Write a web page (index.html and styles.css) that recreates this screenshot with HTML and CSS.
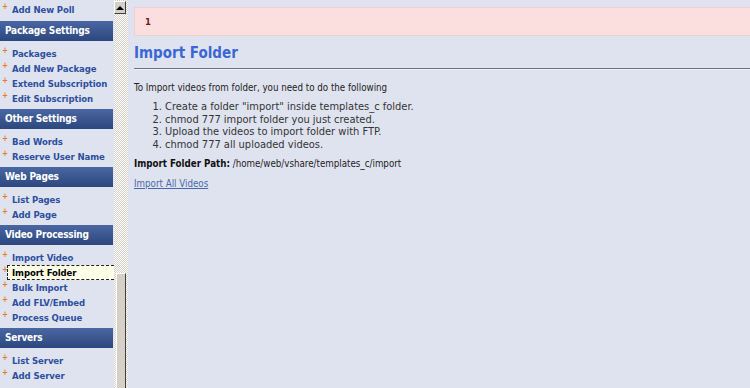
FILE: index.html
```html
<!DOCTYPE html>
<html lang="en">
<head>
    <meta charset="UTF-8">
    <title>Import Folder</title>
    <link rel="stylesheet" href="styles.css">
</head>
<body>
    <div class="sidebar">
        <ul class="menu menu-first">
            <li><a href="#">Add New Poll</a></li>
        </ul>
        <div class="menu-title">Package Settings</div>
        <ul class="menu">
            <li><a href="#">Packages</a></li>
            <li><a href="#">Add New Package</a></li>
            <li><a href="#">Extend Subscription</a></li>
            <li><a href="#">Edit Subscription</a></li>
        </ul>
        <div class="menu-title">Other Settings</div>
        <ul class="menu">
            <li><a href="#">Bad Words</a></li>
            <li><a href="#">Reserve User Name</a></li>
        </ul>
        <div class="menu-title">Web Pages</div>
        <ul class="menu">
            <li><a href="#">List Pages</a></li>
            <li><a href="#">Add Page</a></li>
        </ul>
        <div class="menu-title">Video Processing</div>
        <ul class="menu">
            <li><a href="#">Import Video</a></li>
            <li class="active"><a href="#">Import Folder</a></li>
            <li><a href="#">Bulk Import</a></li>
            <li><a href="#">Add FLV/Embed</a></li>
            <li><a href="#">Process Queue</a></li>
        </ul>
        <div class="menu-title">Servers</div>
        <ul class="menu">
            <li><a href="#">List Server</a></li>
            <li><a href="#">Add Server</a></li>
        </ul>
    </div>

    <div class="scrollbar">
        <div class="scroll-btn"><span class="arrow-up"></span></div>
        <div class="scroll-track"></div>
        <div class="scroll-thumb"></div>
    </div>

    <div class="content">
        <div class="error-box">1</div>
        <h2 class="page-title">Import Folder</h2>
        <p class="intro">To Import videos from folder, you need to do the following</p>
        <ol class="steps">
            <li>Create a folder "import" inside templates_c folder.</li>
            <li>chmod 777 import folder you just created.</li>
            <li>Upload the videos to import folder with FTP.</li>
            <li>chmod 777 all uploaded videos.</li>
        </ol>
        <p class="path"><b>Import Folder Path:</b> /home/web/vshare/templates_c/import</p>
        <p class="link-row"><a class="import-link" href="#">Import All Videos</a></p>
    </div>
</body>
</html>
```

FILE: styles.css
```css
body {
    margin: 0;
    display: flex;
    height: 388px;
    overflow: hidden;
    background: #dfe3f0;
    font-family: Tahoma, "DejaVu Sans Condensed", "DejaVu Sans", sans-serif;
}

.sidebar {
    width: 114px;
    flex-shrink: 0;
    background: #dfe3f0;
}

.menu {
    list-style: none;
    margin: 0;
    padding: 5px 0 3px 0;
}

.menu-first {
    padding-top: 2px;
    padding-bottom: 4px;
}

.menu li {
    display: flex;
    height: 15px;
    align-items: center;
    white-space: nowrap;
}

.menu li::before {
    content: "+";
    color: #e67a2e;
    font-weight: bold;
    font-size: 8px;
    width: 8px;
    padding-left: 2px;
    align-self: flex-start;
    line-height: 9px;
}

.menu a {
    color: #2d4f9e;
    font-weight: bold;
    font-size: 9.5px;
    text-decoration: none;
    padding-left: 2px;
    letter-spacing: -0.1px;
}

.menu li.active a {
    flex: 1;
    color: #000;
    background: #ffffe8;
    border: 1px dashed #222;
    border-right: none;
    margin-left: -3px;
    padding: 1px 4px;
}

.menu-title {
    height: 20px;
    line-height: 20px;
    padding-left: 5px;
    color: #fff;
    font-weight: bold;
    font-size: 10px;
    letter-spacing: -0.2px;
    white-space: nowrap;
    background: linear-gradient(to bottom, #4a67a3, #2c477e);
    margin-right: 1px;
}

/* fake classic scrollbar */
.scrollbar {
    width: 14px;
    flex-shrink: 0;
    display: flex;
    flex-direction: column;
    background-color: #eeebe6;
    background-image: repeating-conic-gradient(#d4d0c8 0 25%, #ffffff 0 50%);
    background-size: 2px 2px;
}

.scroll-btn {
    height: 11px;
    margin: 1px 2px 0 0;
    background: #d4d0c8;
    border-top: 1px solid #fff;
    border-left: 1px solid #fff;
    border-right: 1px solid #404040;
    border-bottom: 1px solid #404040;
    display: flex;
    align-items: center;
    justify-content: center;
}

.arrow-up {
    width: 0;
    height: 0;
    border-left: 4px solid transparent;
    border-right: 4px solid transparent;
    border-bottom: 4px solid #000;
}

.scroll-track {
    height: 259px;
}

.scroll-thumb {
    flex: 1;
    margin: 0 2px 0 2px;
    background: #d4d0c8;
    border-left: 1px solid #fff;
    border-top: 1px solid #fff;
    border-right: 1px solid #404040;
}

.content {
    flex: 1;
    padding: 7px 0 0 6px;
    color: #222;
}

.error-box {
    height: 27px;
    line-height: 27px;
    padding-left: 10px;
    background: #fbdfdf;
    border: 1px solid #eed0d4;
    border-right: none;
    color: #7a1616;
    font-weight: bold;
    font-size: 9.5px;
}

.page-title {
    margin: 8px 0 0 0;
    padding-bottom: 6px;
    color: #3b67d4;
    font-size: 15px;
    font-weight: bold;
    border-bottom: 1px solid #6c7385;
    box-shadow: 0 1px 0 #eef0f8;
}

.intro {
    margin: 12px 0 0 0;
    font-size: 9.7px;
    line-height: 13px;
}

.steps {
    margin: 7px 0 0 0;
    padding-left: 31px;
    font-size: 11px;
    line-height: 12.7px;
    color: #333;
}

.path {
    margin: 5px 0 0 0;
    font-size: 9.7px;
    line-height: 13px;
}

.path b {
    color: #111;
}

.link-row {
    margin: 7px 0 0 0;
    font-size: 9.7px;
    line-height: 13px;
}

.import-link {
    color: #4a68a8;
}
```
